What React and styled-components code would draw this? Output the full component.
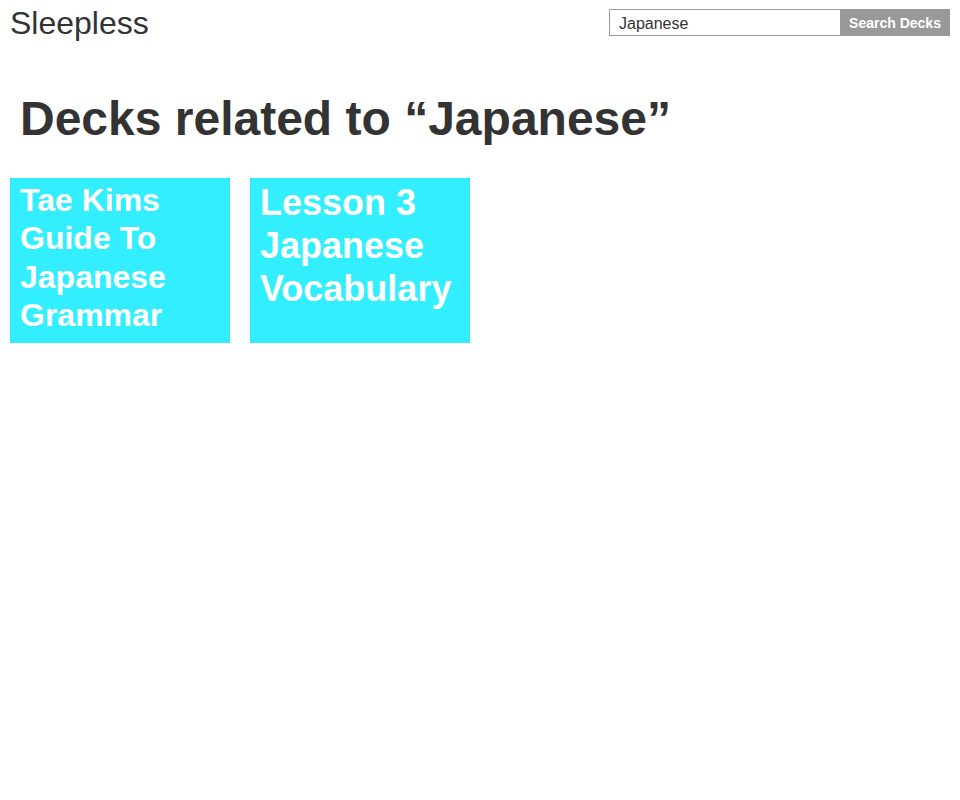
import React from 'react'
import styled, { createGlobalStyle } from 'styled-components'

const GlobalStyle = createGlobalStyle`
  body {
    margin: 0;
    background: #fff;
    font-family: "Liberation Sans", Arial, sans-serif;
    color: #333;
  }
`;

const Header = styled.header`
  display: flex;
  justify-content: space-between;
  align-items: flex-start;
  padding: 5px 10px 0 10px;
`;

const Logo = styled.div`
  font-size: 32px;
  line-height: 36px;
  color: #333;
`;

const SearchForm = styled.form`
  display: flex;
  margin-top: 4px;
`;

const SearchInput = styled.input`
  width: 231px;
  height: 27px;
  box-sizing: border-box;
  border: 1px solid #999;
  border-right: none;
  padding: 2px 9px 0;
  font-family: "Liberation Sans", Arial, sans-serif;
  font-size: 16px;
  color: #333;
  outline: none;
`;

const SearchButton = styled.button`
  width: 110px;
  height: 27px;
  border: none;
  background: #999;
  color: #fff;
  font-family: "Liberation Sans", Arial, sans-serif;
  font-weight: bold;
  font-size: 14px;
  padding: 0;
`;

const Title = styled.h1`
  margin: 51px 0 0 20px;
  font-size: 48px;
  font-weight: bold;
  line-height: 54px;
  color: #333;
`;

const Grid = styled.div`
  display: flex;
  gap: 20px;
  padding: 32px 10px 0;
`;

const Card = styled.div`
  width: 220px;
  height: 165px;
  box-sizing: border-box;
  background: #33eeff;
  padding: 3px 10px 0;
  color: #fff;
  font-weight: bold;
  font-size: ${p => p.size}px;
  line-height: 1.2;
`;

const decks = [
  { name: 'Tae Kims Guide To Japanese Grammar', size: 32 },
  { name: 'Lesson 3 Japanese Vocabulary', size: 36 }
];

export default function App() {
  return (
    <>
      <GlobalStyle />
      <Header>
        <Logo>Sleepless</Logo>
        <SearchForm onSubmit={e => e.preventDefault()}>
          <SearchInput defaultValue="Japanese" />
          <SearchButton type="submit">Search Decks</SearchButton>
        </SearchForm>
      </Header>
      <Title>Decks related to “Japanese”</Title>
      <Grid>
        {decks.map(d => (
          <Card key={d.name} size={d.size}>{d.name}</Card>
        ))}
      </Grid>
    </>
  );
}
